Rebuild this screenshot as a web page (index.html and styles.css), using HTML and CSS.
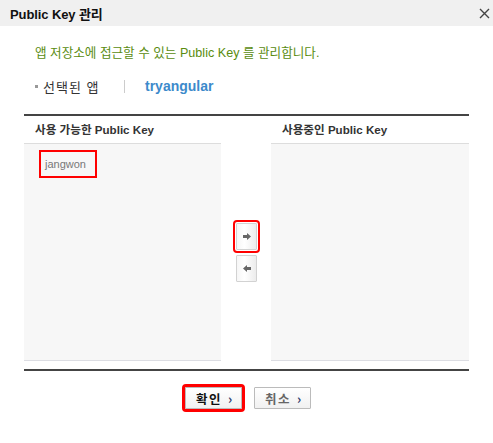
FILE: index.html
```html
<!DOCTYPE html>
<html lang="ko">
<head>
<meta charset="utf-8">
<link rel="stylesheet" href="styles.css">
</head>
<body>
<div class="dialog">
  <div class="titlebar">
    <span class="title">Public Key 관리</span>
    <svg class="close" width="11" height="11" viewBox="0 0 11 11"><path d="M1 1L10 10M10 1L1 10" stroke="#444" stroke-width="1.4" fill="none"/></svg>
  </div>
  <div class="content">
    <p class="desc">앱 저장소에 접근할 수 있는 Public Key 를 관리합니다.</p>
    <div class="app-row">
      <span class="bullet"></span>
      <span class="app-label">선택된 앱</span>
      <span class="sep"></span>
      <span class="app-name">tryangular</span>
    </div>
    <div class="panels">
      <div class="panel">
        <div class="panel-head">사용 가능한 Public Key</div>
        <div class="panel-list">
          <div class="key-item selected">jangwon</div>
        </div>
      </div>
      <div class="mover">
        <button class="arrow selected" aria-label="add">
          <svg width="8" height="7" viewBox="0 0 8 7"><path d="M0 2H4V0L8 3.5L4 7V5H0Z" fill="#666"/></svg>
        </button>
        <button class="arrow" aria-label="remove">
          <svg width="8" height="7" viewBox="0 0 8 7"><path d="M8 2H4V0L0 3.5L4 7V5H8Z" fill="#666"/></svg>
        </button>
      </div>
      <div class="panel">
        <div class="panel-head">사용중인 Public Key</div>
        <div class="panel-list"></div>
      </div>
    </div>
    <div class="actions">
      <button class="btn ok selected">확인 <span class="chev">›</span></button>
      <button class="btn cancel">취소 <span class="chev">›</span></button>
    </div>
  </div>
</div>
</body>
</html>
```
FILE: styles.css
```css
html, body {
  margin: 0;
  padding: 0;
  background: #fff;
}
body {
  font-family: "Liberation Sans", "Noto Sans CJK KR", sans-serif;
  font-size: 12px;
  color: #333;
}
.dialog {
  width: 493px;
  height: 443px;
}
.titlebar {
  height: 26px;
  background: #f0f0f0;
  display: flex;
  align-items: center;
  justify-content: space-between;
  padding: 0 3px 0 10px;
}
.title {
  font-size: 13px;
  font-weight: bold;
  color: #111;
  letter-spacing: -0.1px;
}
.close {
  display: block;
}
.content {
  padding: 0 24px;
}
.desc {
  margin: 19px 0 0 11px;
  height: 16px;
  line-height: 16px;
  color: #5a8c10;
  font-size: 12.6px;
}
.app-row {
  display: flex;
  align-items: center;
  margin: 17px 0 0 11px;
  height: 16px;
}
.bullet {
  width: 3px;
  height: 3px;
  background: #999;
  margin-right: 5px;
  flex: none;
}
.app-label {
  color: #333;
  font-size: 13px;
  letter-spacing: 1px;
  width: 81px;
  flex: none;
}
.sep {
  width: 1px;
  height: 13px;
  background: #ccc;
  margin: 0 20px 0 0;
  flex: none;
}
.app-name {
  color: #3c8acb;
  font-weight: bold;
  font-size: 14px;
}
.panels {
  margin-top: 20px;
  border-top: 2px solid #444;
  display: grid;
  grid-template-columns: 197px 50px 198px;
  width: 445px;
}
.panel {
  display: flex;
  flex-direction: column;
}
.panel-head {
  height: 27px;
  line-height: 27px;
  padding-left: 11px;
  font-size: 11.6px;
  font-weight: bold;
  color: #333;
  border-bottom: 1px solid #ddd;
}
.panel-list {
  height: 217px;
  background: #f7f7f7;
  border-bottom: 1px solid #dcdde3;
  padding: 8px 0 0 17px;
  box-sizing: border-box;
}
.key-item {
  display: inline-block;
  width: 50px;
  height: 24px;
  line-height: 24px;
  padding-left: 4px;
  font-size: 11px;
  color: #777;
}
.key-item.selected {
  outline: 2px solid #f00;
}
.mover {
  display: flex;
  flex-direction: column;
  align-items: center;
  justify-content: flex-start;
  gap: 5px;
  padding-top: 107px;
  padding-left: 1px;
}
.arrow {
  width: 21px;
  height: 27px;
  padding: 0;
  border: 1px solid #d2d2d2;
  border-radius: 1px;
  background: linear-gradient(to right, #f6f6f6, #fff 40%, #ececec);
  display: flex;
  align-items: center;
  justify-content: center;
}
.arrow.selected {
  outline: 2px solid #f00;
  outline-offset: 1px;
}
.arrow svg {
  display: block;
}
.actions {
  border-top: 2px solid #444;
  margin-top: 8px;
  width: 445px;
  display: flex;
  justify-content: center;
  gap: 12px;
  padding-top: 16px;
  padding-left: 2px;
  box-sizing: border-box;
}
.btn {
  height: 22px;
  width: 57px;
  padding: 0 0 0 2px;
  border: 1px solid #bbb;
  border-radius: 1px;
  background: linear-gradient(to bottom, #fff, #f1f1f1);
  font-family: "Noto Sans CJK KR", "Liberation Sans", sans-serif;
  font-size: 12.5px;
  font-weight: bold;
  letter-spacing: 1.5px;
  display: flex;
  align-items: center;
  justify-content: center;
  gap: 6px;
}
.btn.ok {
  color: #111;
}
.btn.cancel {
  color: #666;
}
.btn.selected {
  outline: 3px solid #f00;
  outline-offset: 0;
}
.chev {
  color: #2a3a6a;
  font-size: 13px;
  font-weight: bold;
  letter-spacing: 0;
}
```
